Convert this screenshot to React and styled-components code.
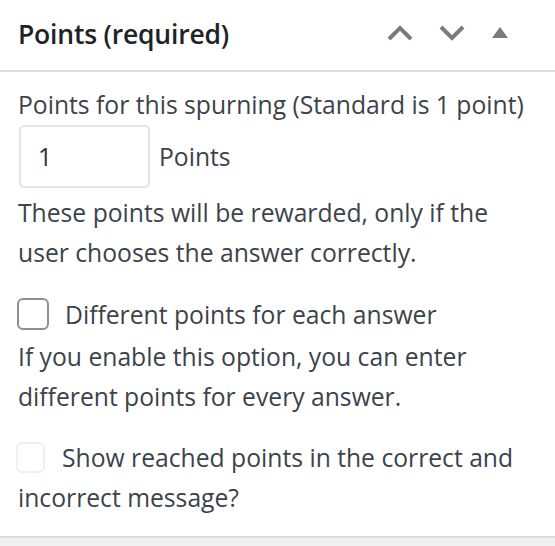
import styled, { createGlobalStyle } from "styled-components";

const GlobalStyle = createGlobalStyle`
  html, body {
    margin: 0;
    padding: 0;
    background: #f0f0f1;
  }
  body {
    font-family: "Open Sans", "Noto Sans", sans-serif;
    color: #3c434a;
  }
`;

const Panel = styled.div`
  width: 555px;
  height: 538px;
  box-sizing: border-box;
  background: #fff;
  border-bottom: 2px solid #dcdcde;
`;

const Header = styled.div`
  height: 70px;
  display: flex;
  align-items: center;
  justify-content: space-between;
  padding: 0 0 0 18px;
  border-bottom: 2px solid #dcdcde;
`;

const Title = styled.h2`
  margin: -3px 0 0;
  font-size: 26.5px;
  font-weight: 600;
  color: #1d2327;
  letter-spacing: -0.2px;
`;

const Actions = styled.div`
  display: flex;
  align-items: center;
  height: 100%;
  padding-right: 33px;
`;

const IconButton = styled.button`
  width: ${(p) => p.$w || 52}px;
  height: 100%;
  padding: 0 0 4px;
  border: 0;
  background: none;
  display: flex;
  align-items: center;
  justify-content: center;
  color: #787c82;
`;

const Body = styled.div`
  padding: 13px 18px 0;
  font-size: 24.7px;
  line-height: 40px;
`;

const Text = styled.p`
  margin: ${(p) => p.$top || 0}px 0 0;
`;

const InputRow = styled.div`
  display: flex;
  align-items: center;
  gap: 9px;
`;

const NumberInput = styled.input`
  width: 131px;
  height: 63px;
  box-sizing: border-box;
  margin-left: 1px;
  padding: 0 17px;
  border: 2px solid #e2e4e7;
  border-radius: 5px;
  font-family: inherit;
  font-size: 24.7px;
  color: #2c3338;
  outline: none;
`;

const Check = styled.span`
  display: inline-block;
  vertical-align: middle;
  width: ${(p) => (p.$faint ? 29 : 32)}px;
  height: ${(p) => (p.$faint ? 31 : 32)}px;
  box-sizing: border-box;
  margin: -6px ${(p) => (p.$faint ? 17 : 16)}px 0 ${(p) => (p.$faint ? -2 : -1)}px;
  border: 2px solid ${(p) => (p.$faint ? "#eeeff1" : "#8c8f94")};
  border-radius: 6px;
  background: #fff;
`;

const Up = () => (
  <svg width="26" height="16" viewBox="0 0 26 16">
    <path d="M2 14 L13 3 L24 14" fill="none" stroke="currentColor" strokeWidth="4" />
  </svg>
);

const Down = () => (
  <svg width="26" height="16" viewBox="0 0 26 16">
    <path d="M2 2 L13 13 L24 2" fill="none" stroke="currentColor" strokeWidth="4" />
  </svg>
);

const Triangle = () => (
  <svg width="16" height="12" viewBox="0 0 16 12">
    <path d="M8 0 L16 11 L0 11 Z" fill="currentColor" />
  </svg>
);

export default function App() {
  return (
    <>
      <GlobalStyle />
      <Panel>
        <Header>
          <Title>Points (required)</Title>
          <Actions>
            <IconButton><Up /></IconButton>
            <IconButton><Down /></IconButton>
            <IconButton $w={44}><Triangle /></IconButton>
          </Actions>
        </Header>
        <Body>
          <Text>Points for this spurning (Standard is 1 point)</Text>
          <InputRow>
            <NumberInput defaultValue="1" />
            <span>Points</span>
          </InputRow>
          <Text $top={5}>These points will be rewarded, only if the user chooses the answer correctly.</Text>
          <Text $top={22}>
            <Check />Different points for each answer
          </Text>
          <Text $top={2}>If you enable this option, you can enter different points for every answer.</Text>
          <Text $top={21}>
            <Check $faint />Show reached points in the correct and incorrect message?
          </Text>
        </Body>
      </Panel>
    </>
  );
}
